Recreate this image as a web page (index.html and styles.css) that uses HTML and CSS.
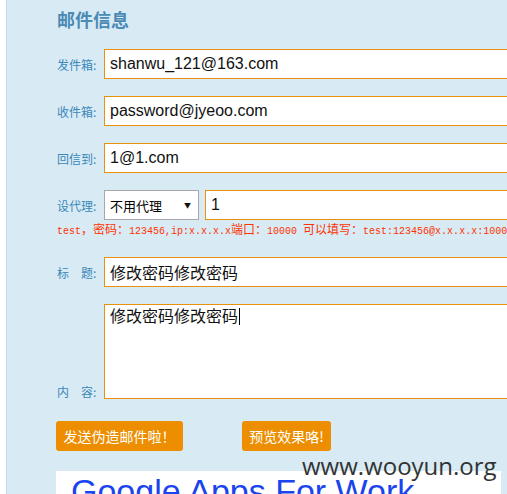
FILE: index.html
```html
<!DOCTYPE html>
<html lang="zh-CN">
<head>
<meta charset="utf-8">
<title>邮件信息</title>
<link rel="stylesheet" href="styles.css">
</head>
<body>
<div class="page">
  <h2 class="title">邮件信息</h2>
  <div class="row">
    <span class="label">发件箱:</span>
    <div class="input">shanwu_121@163.com</div>
  </div>
  <div class="row">
    <span class="label">收件箱:</span>
    <div class="input">password@jyeoo.com</div>
  </div>
  <div class="row">
    <span class="label">回信到:</span>
    <div class="input">1@1.com</div>
  </div>
  <div class="row row-proxy">
    <span class="label">设代理:</span>
    <div class="select"><span class="select-text">不用代理</span><span class="arrow">▼</span></div>
    <div class="input input-proxy">1</div>
  </div>
  <div class="note">test<span class="cjk">，密码：</span>123456,ip:x.x.x.x<span class="cjk">端口：</span>10000 <span class="cjk">可以填写：</span>test:123456@x.x.x.x:10000</div>
  <div class="row">
    <span class="label">标&emsp;题:</span>
    <div class="input input-cjk">修改密码修改密码</div>
  </div>
  <div class="row row-area">
    <span class="label">内&emsp;容:</span>
    <div class="textarea"><span class="area-text">修改密码修改密码</span><span class="caret"></span></div>
  </div>
  <div class="buttons">
    <button class="btn btn-send">发送伪造邮件啦！</button>
    <button class="btn btn-preview">预览效果咯!</button>
  </div>
  <div class="preview">
    <div class="preview-title">Google Apps For Work</div>
  </div>
  <div class="watermark">www.wooyun.org</div>
</div>
</body>
</html>
```
FILE: styles.css
```css
html, body {
  margin: 0;
  padding: 0;
  background: #ffffff;
  overflow: hidden;
}
body {
  font-family: "Liberation Sans", "Noto Sans CJK SC", sans-serif;
}
.page {
  position: relative;
  margin-left: 6px;
  border-left: 1px solid #c2dcea;
  background: #d8ebf5;
  height: 494px;
  padding-left: 49px;
  box-sizing: border-box;
  overflow: hidden;
}
.title {
  margin: 0;
  padding-top: 8px;
  height: 41px;
  line-height: 22px;
  font-size: 18px;
  font-weight: bold;
  color: #4a8ab5;
  font-family: "Noto Sans CJK SC", sans-serif;
  padding-left: 1px;
}
.row {
  display: flex;
  align-items: center;
  height: 30px;
  margin-bottom: 17px;
}
.label {
  width: 48px;
  flex: none;
  font-size: 12px;
  color: #3b87b8;
  font-family: "Noto Sans CJK SC", sans-serif;
  white-space: nowrap;
  padding-left: 1px;
  box-sizing: border-box;
}
.input {
  flex: none;
  width: 420px;
  height: 30px;
  box-sizing: border-box;
  border: 1px solid #e8920c;
  background: #ffffff;
  padding-left: 5px;
  font-size: 16px;
  line-height: 28px;
  color: #111111;
  white-space: nowrap;
}
.input-cjk {
  font-family: "Noto Sans CJK SC", sans-serif;
}
.row-proxy {
  margin-bottom: 0;
}
.select {
  flex: none;
  width: 95px;
  height: 30px;
  box-sizing: border-box;
  border: 1px solid #a8a8a8;
  background: #ffffff;
  display: flex;
  align-items: center;
  justify-content: space-between;
  padding: 0 7px 0 5px;
  font-family: "Noto Sans CJK SC", sans-serif;
  font-size: 13px;
  color: #000;
}
.arrow {
  font-size: 7px;
  color: #111;
}
.input-proxy {
  margin-left: 6px;
  width: 320px;
}
.note {
  margin-top: 1px;
  height: 16px;
  line-height: 16px;
  margin-bottom: 20px;
  font-family: "Liberation Mono", monospace;
  font-size: 10px;
  color: #ff3300;
  white-space: nowrap;
  padding-left: 1px;
}
.cjk {
  font-family: "Noto Sans CJK SC", sans-serif;
  font-size: 12px;
}
.row-area {
  height: 95px;
  align-items: flex-end;
  margin-bottom: 22px;
}
.row-area .label {
  line-height: 14px;
}
.textarea {
  flex: none;
  width: 420px;
  height: 95px;
  box-sizing: border-box;
  border: 1px solid #e8920c;
  background: #ffffff;
  padding: 0 0 0 5px;
  font-family: "Noto Sans CJK SC", sans-serif;
  font-size: 16px;
  line-height: 20px;
  color: #111;
}
.caret {
  display: inline-block;
  width: 1px;
  height: 17px;
  background: #000;
  vertical-align: -3px;
  margin-left: 1px;
}
.buttons {
  display: flex;
  gap: 59px;
  height: 30px;
  margin-bottom: 20px;
}
.btn {
  height: 30px;
  border: none;
  border-radius: 3px;
  background: #ec8e00;
  color: #ffffff;
  font-family: "Noto Sans CJK SC", sans-serif;
  font-size: 14px;
  padding: 0 7px;
  cursor: pointer;
}
.btn-send {
  width: 127px;
}
.btn-preview {
  width: 89px;
}
.preview {
  width: 445px;
  height: 40px;
  background: #ffffff;
  padding-left: 15px;
  box-sizing: border-box;
}
.preview-title {
  font-family: "Liberation Sans", sans-serif;
  font-size: 34px;
  line-height: 40px;
  color: #1a44ee;
  white-space: nowrap;
}
.watermark {
  position: absolute;
  left: 295px;
  top: 449px;
  font-family: "Open Sans", sans-serif;
  font-size: 24px;
  color: #333333;
  white-space: nowrap;
}
```
